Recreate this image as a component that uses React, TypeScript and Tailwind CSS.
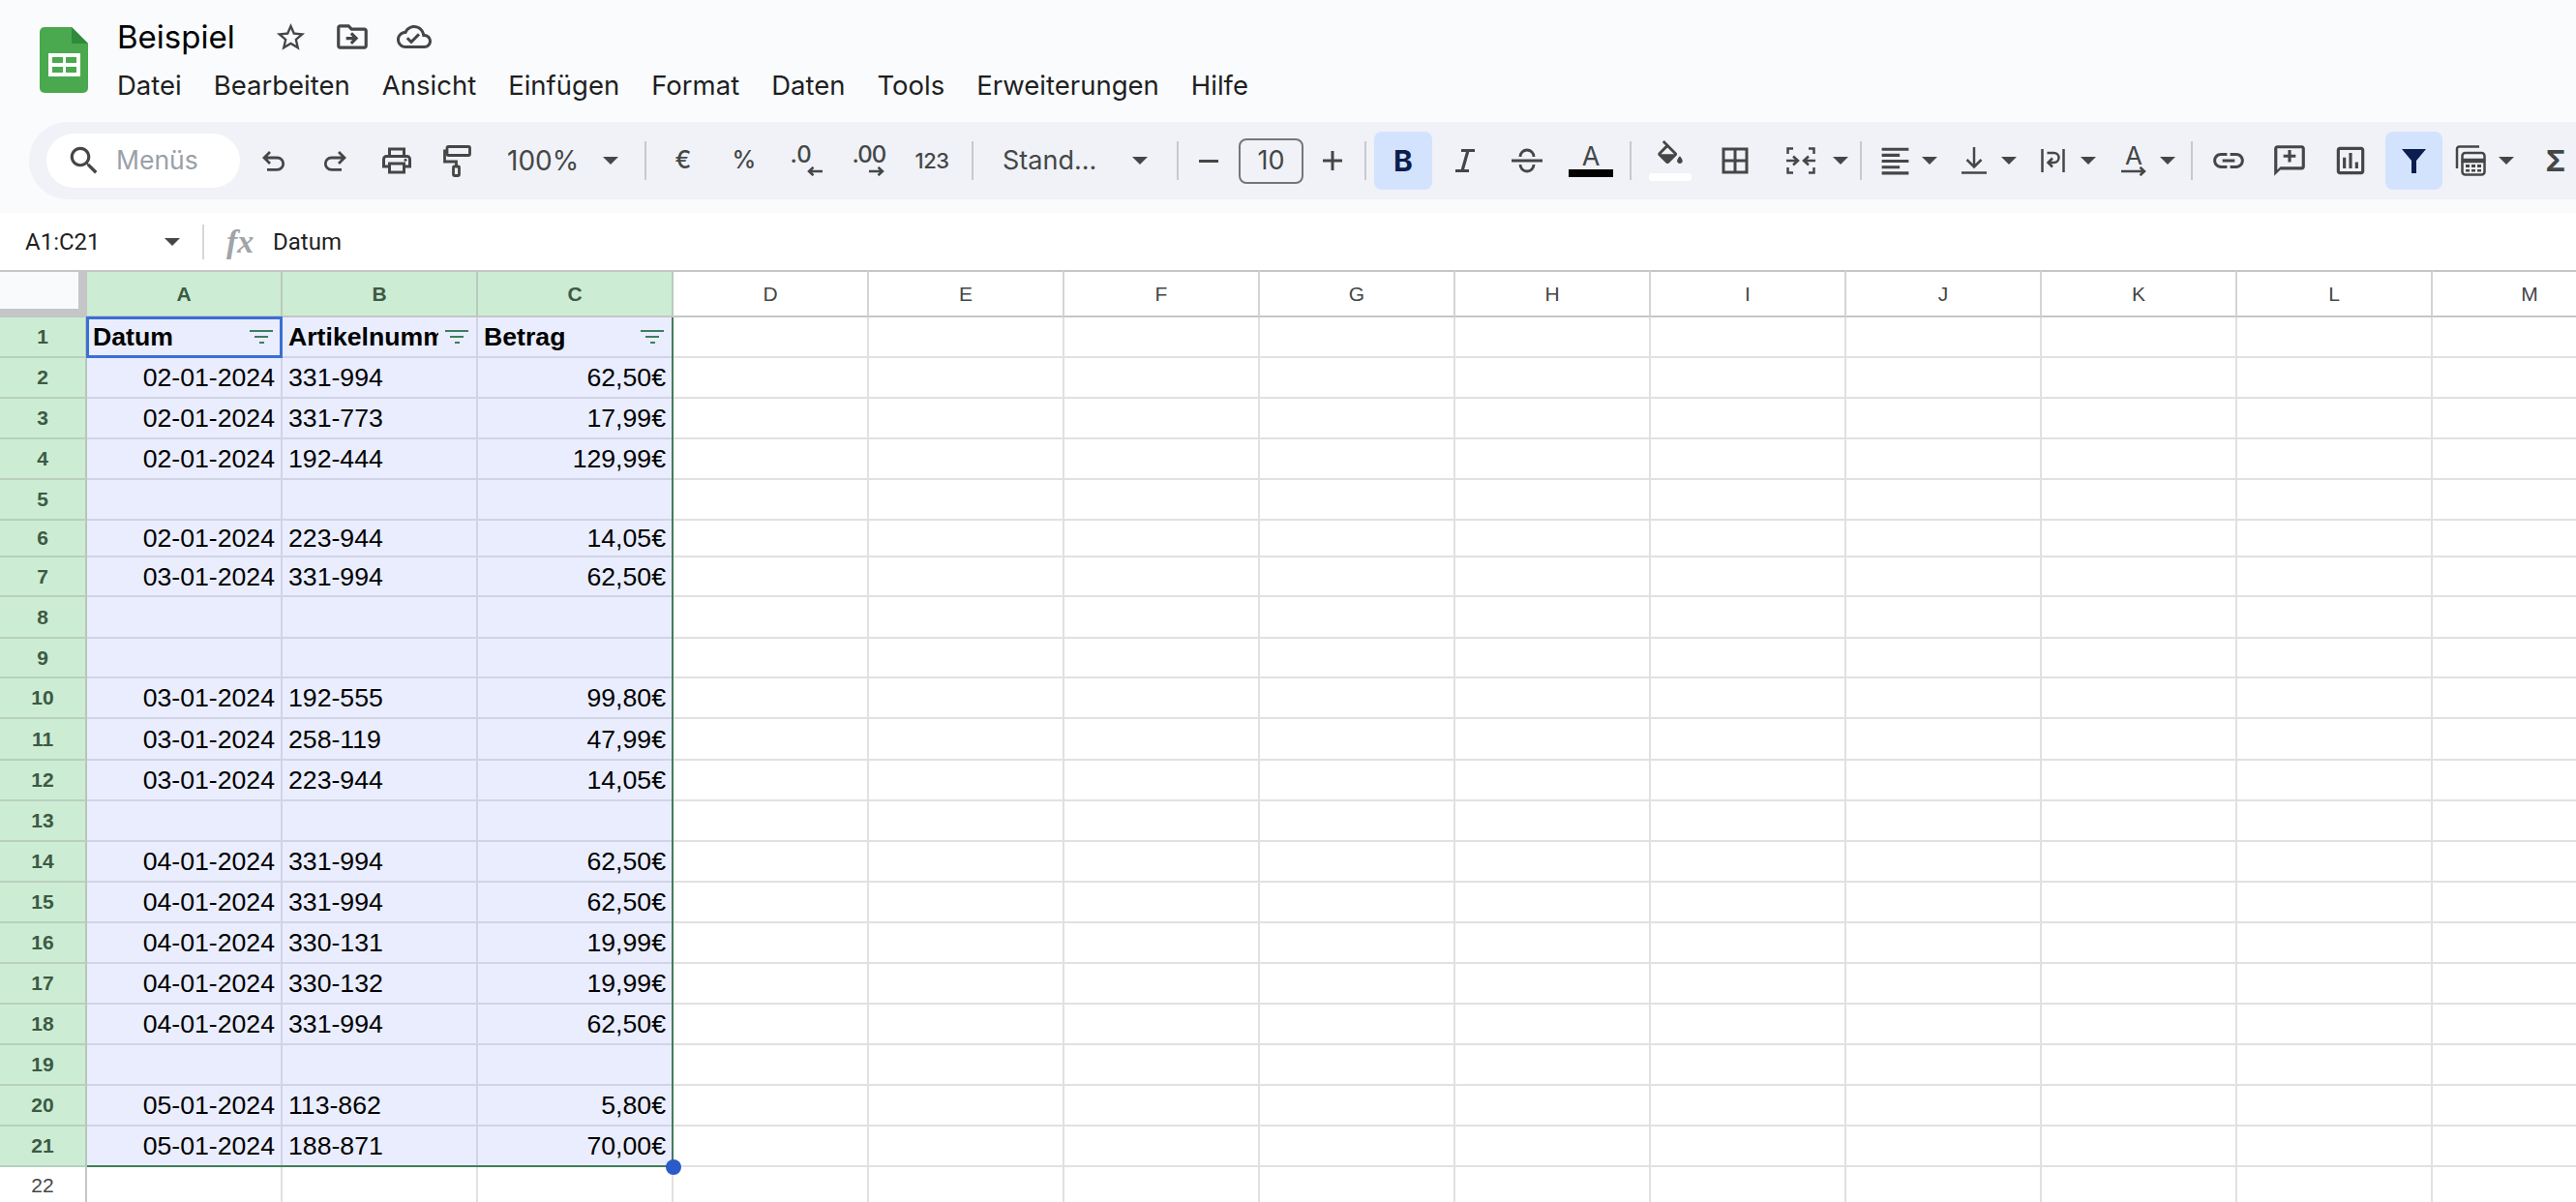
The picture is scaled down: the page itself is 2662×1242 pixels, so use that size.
import React from "react";

const rows = [
  { n: 1, h: "h-[42px]" },
  { n: 2, h: "h-[42px]", d: "02-01-2024", b: "331-994", c: "62,50€" },
  { n: 3, h: "h-[42px]", d: "02-01-2024", b: "331-773", c: "17,99€" },
  { n: 4, h: "h-[42px]", d: "02-01-2024", b: "192-444", c: "129,99€" },
  { n: 5, h: "h-[42px]" },
  { n: 6, h: "h-[38px]", d: "02-01-2024", b: "223-944", c: "14,05€" },
  { n: 7, h: "h-[41px]", d: "03-01-2024", b: "331-994", c: "62,50€" },
  { n: 8, h: "h-[43px]" },
  { n: 9, h: "h-[41px]" },
  { n: 10, h: "h-[42px]", d: "03-01-2024", b: "192-555", c: "99,80€" },
  { n: 11, h: "h-[43px]", d: "03-01-2024", b: "258-119", c: "47,99€" },
  { n: 12, h: "h-[42px]", d: "03-01-2024", b: "223-944", c: "14,05€" },
  { n: 13, h: "h-[42px]" },
  { n: 14, h: "h-[42px]", d: "04-01-2024", b: "331-994", c: "62,50€" },
  { n: 15, h: "h-[42px]", d: "04-01-2024", b: "331-994", c: "62,50€" },
  { n: 16, h: "h-[42px]", d: "04-01-2024", b: "330-131", c: "19,99€" },
  { n: 17, h: "h-[42px]", d: "04-01-2024", b: "330-132", c: "19,99€" },
  { n: 18, h: "h-[42px]", d: "04-01-2024", b: "331-994", c: "62,50€" },
  { n: 19, h: "h-[42px]" },
  { n: 20, h: "h-[42px]", d: "05-01-2024", b: "113-862", c: "5,80€" },
  { n: 21, h: "h-[42px]", d: "05-01-2024", b: "188-871", c: "70,00€" },
];

const plainCols = ["D", "E", "F", "G", "H", "I", "J", "K", "L", "M"];
const menus = ["Datei", "Bearbeiten", "Ansicht", "Einfügen", "Format", "Daten", "Tools", "Erweiterungen", "Hilfe"];

/* toolbar slot */
function Slot({ w, children }: { w: string; children?: React.ReactNode }) {
  return <div className={"flex shrink-0 items-center justify-center " + w}>{children}</div>;
}

function Sep({ w }: { w: string }) {
  return (
    <div className={"flex shrink-0 items-center justify-center " + w}>
      <div className="h-[40px] w-[2px] bg-[#c7c9cc]" />
    </div>
  );
}

function Caret() {
  return (
    <svg width="16" height="8" viewBox="0 0 16 8" className="shrink-0">
      <path d="M0 0h16L8 8z" fill="#444746" />
    </svg>
  );
}

function Mi({ size, d, extra }: { size: number; d: string; extra?: React.ReactNode }) {
  return (
    <svg width={size} height={size} viewBox="0 0 24 24" fill="#444746" className="shrink-0">
      <path d={d} />
      {extra}
    </svg>
  );
}

function Line({ w, h, vb, d, sw = 2.5 }: { w: number; h: number; vb: string; d: string; sw?: number }) {
  return (
    <svg width={w} height={h} viewBox={vb} fill="none" stroke="#444746" strokeWidth={sw} className="shrink-0">
      <path d={d} />
    </svg>
  );
}

function SheetsLogo() {
  return (
    <svg width="50" height="68" viewBox="0 0 50 68" className="mt-[28px] shrink-0">
      <path d="M5 0H33L50 17V63a5 5 0 0 1-5 5H5a5 5 0 0 1-5-5V5a5 5 0 0 1 5-5z" fill="#4aa94f" />
      <path d="M33 0L50 17H33z" fill="#2f8a3c" />
      <path d="M9 27h33v24H9z" fill="#fff" />
      <path d="M13 31h11v6H13zM27 31h11v6H27zM13 41h11v6H13zM27 41h11v6H27z" fill="#4aa94f" />
    </svg>
  );
}

function ArrowSmall({ left }: { left?: boolean }) {
  return (
    <Line
      w={16}
      h={10}
      vb="0 0 16 10"
      d={left ? "M16 5H2M6.5 .8L2 5l4.5 4.2" : "M0 5H14M9.5 .8L14 5 9.5 9.2"}
    />
  );
}

function Toolbar() {
  return (
    <div className="ml-[30px] flex h-[80px] items-center rounded-l-[40px] bg-[#f0f2f8] pl-[18px] text-[#444746]">
      <div className="flex h-[56px] w-[200px] shrink-0 items-center rounded-[28px] bg-white pl-[20px]">
        <Mi size={38} d="M15.5 14h-.79l-.28-.27C15.41 12.59 16 11.11 16 9.5 16 5.91 13.09 3 9.5 3S3 5.91 3 9.5 5.91 16 9.5 16c1.61 0 3.09-.59 4.23-1.57l.27.28v.79l5 4.99L20.49 19l-4.99-5zm-6 0C7.01 14 5 11.99 5 9.5S7.01 5 9.5 5 14 7.01 14 9.5 11.99 14 9.5 14z" />
        <span className="ml-[14px] text-[26.5px] text-[#9aa0a6]">Menüs</span>
      </div>
      <Slot w="w-[69px]">
        <Line w={25} h={22} vb="0 0 25 22" d="M9 2L3 8l6 6M3 8H16.5a6.2 6.2 0 0 1 0 12.4H6" sw={2.8} />
      </Slot>
      <Slot w="w-[59px]">
        <Line w={25} h={22} vb="0 0 25 22" d="M16 2l6 6-6 6M22 8H8.5a6.2 6.2 0 0 0 0 12.4H19" sw={2.8} />
      </Slot>
      <Slot w="w-[68px]">
        <Mi
          size={36}
          d="M19 8h-1V3H6v5H5c-1.66 0-3 1.34-3 3v6h4v4h12v-4h4v-6c0-1.66-1.34-3-3-3zM8 5h8v3H8V5zm8 12v2H8v-4h8v2zm2-2v-2H6v2H4v-4c0-.55.45-1 1-1h14c.55 0 1 .45 1 1v4h-2z"
          extra={<circle cx="18" cy="11.5" r="1" />}
        />
      </Slot>
      <Slot w="w-[57px]">
        <svg width="29" height="33" viewBox="0 0 29 33" fill="none" stroke="#444746" strokeWidth="2.8" className="shrink-0">
          <rect x="4" y="1.5" width="23.5" height="9" rx="1.5" />
          <path d="M4 6H1.5v11h12v5" />
          <rect x="10.5" y="22" width="6" height="9.5" rx="1" />
        </svg>
      </Slot>
      <div className="flex w-[109px] shrink-0 items-center pl-[23px] text-[28px]">100%</div>
      <Slot w="w-[42px]"><Caret /></Slot>
      <Sep w="w-[30px]" />
      <Slot w="w-[48px]"><span className="text-[25px] font-medium">€</span></Slot>
      <Slot w="w-[78px]"><span className="text-[25px] font-medium">%</span></Slot>
      <Slot w="w-[50px]">
        <div className="flex w-[33px] flex-col">
          <span className="h-[20px] self-start text-[24px] leading-[20px] font-medium">.0</span>
          <div className="mt-[2px] self-end"><ArrowSmall left /></div>
        </div>
      </Slot>
      <Slot w="w-[78px]">
        <div className="flex w-[33px] flex-col">
          <span className="h-[20px] self-start text-[24px] leading-[20px] font-medium tracking-[-1px]">.00</span>
          <div className="mt-[2px] self-end"><ArrowSmall /></div>
        </div>
      </Slot>
      <Slot w="w-[54px]"><span className="text-[22px] font-medium tracking-[-0.5px]">123</span></Slot>
      <Sep w="w-[30px]" />
      <div className="flex w-[130px] shrink-0 items-center pl-[16px] text-[27px]">Stand...</div>
      <Slot w="w-[56px]"><Caret /></Slot>
      <Sep w="w-[22px]" />
      <Slot w="w-[42px]"><div className="h-[3px] w-[20px] bg-[#444746]" /></Slot>
      <Slot w="w-[87px]">
        <div className="flex h-[47px] w-[67px] items-center justify-center rounded-[8px] border-2 border-[#747775] text-[27px]">10</div>
      </Slot>
      <Slot w="w-[40px]">
        <Line w={20} h={20} vb="0 0 20 20" d="M0 10H20M10 0V20" sw={3} />
      </Slot>
      <Sep w="w-[23px] pl-[5px]" />
      <div className="flex h-[60px] w-[60px] shrink-0 items-center justify-center rounded-[8px] bg-[#d3e3fd] text-[30px] font-bold text-[#0c1d4f]">B</div>
      <Slot w="w-[68px]">
        <Line w={22} h={24} vb="0 0 22 24" d="M7 1.5H21M1 22.5H15M14 1.5L8 22.5" sw={3.2} />
      </Slot>
      <Slot w="w-[60px]">
        <Line w={32} h={26} vb="0 0 32 26" d="M0 13H32M9 9a7 7 0 0 1 14 0M9 17a7 7 0 0 0 14 0" sw={2.8} />
      </Slot>
      <Slot w="w-[72px]">
        <div className="flex w-[46px] flex-col items-center">
          <span className="h-[25px] text-[27px] leading-[25px]">A</span>
          <div className="mt-[1px] h-[8px] w-[46px] bg-black" />
        </div>
      </Slot>
      <Sep w="w-[10px]" />
      <Slot w="w-[72px]">
        <div className="flex w-[44px] flex-col items-center">
          <Mi size={34} d="M16.56 8.94L7.62 0 6.21 1.41l2.38 2.38-5.15 5.15c-.59.59-.59 1.54 0 2.12l5.5 5.5c.29.29.68.44 1.06.44s.77-.15 1.06-.44l5.5-5.5c.59-.58.59-1.53 0-2.12zM5.21 10L10 5.21 14.79 10H5.21zM19 11.5s-2 2.17-2 3.5c0 1.1.9 2 2 2s2-.9 2-2c0-1.33-2-3.5-2-3.5z" />
          <div className="h-[8px] w-[44px] rounded-[3px] bg-white" />
        </div>
      </Slot>
      <Slot w="w-[62px]">
        <Mi size={36} d="M3 3v18h18V3H3zm8 16H5v-6h6v6zm0-8H5V5h6v6zm8 8h-6v-6h6v6zm0-8h-6V5h6v6z" />
      </Slot>
      <div className="w-[14px] shrink-0" />
      <Slot w="w-[46px]">
        <Line
          w={30}
          h={28}
          vb="0 0 30 28"
          d="M7 1.5H1.5V7M1.5 21V26.5H7M23 1.5H28.5V7M28.5 21V26.5H23M0 14H11M7 9.5L12 14 7 18.5M30 14H19M23 9.5L18 14 23 18.5"
        />
      </Slot>
      <Slot w="w-[36px]"><Caret /></Slot>
      <Sep w="w-[6px]" />
      <div className="w-[7px] shrink-0" />
      <Slot w="w-[50px]">
        <Mi size={37} d="M15 15H3v2h12v-2zm0-8H3v2h12V7zM3 13h18v-2H3v2zm0 8h18v-2H3v2zM3 3v2h18V3H3z" />
      </Slot>
      <Slot w="w-[22px]"><Caret /></Slot>
      <div className="w-[12px] shrink-0" />
      <Slot w="w-[46px]">
        <Line w={26} h={28} vb="0 0 26 28" d="M13 0V20M5.5 13L13 20.5 20.5 13M0 26.5H26" />
      </Slot>
      <Slot w="w-[26px]"><Caret /></Slot>
      <div className="w-[12px] shrink-0" />
      <Slot w="w-[40px]">
        <Line w={25} h={24} vb="0 0 25 24" d="M1.5 0V24M23.5 0V24M6.5 4H13.5a4.5 4.5 0 0 1 0 10H8M12 9.5L7.5 14 12 18.5" />
      </Slot>
      <Slot w="w-[34px]"><Caret /></Slot>
      <div className="w-[7px] shrink-0" />
      <Slot w="w-[46px]">
        <div className="flex w-[26px] flex-col items-center">
          <span className="h-[22px] text-[26px] leading-[22px]">A</span>
          <Line w={26} h={10} vb="0 0 26 10" d="M0 5H24M19.5 .8L24 5 19.5 9.2" />
        </div>
      </Slot>
      <Slot w="w-[24px]"><Caret /></Slot>
      <Sep w="w-[14px] ml-[6px] mr-[-6px]" />
      <Slot w="w-[74px]">
        <Mi size={38} d="M3.9 12c0-1.71 1.39-3.1 3.1-3.1h4V7H7c-2.76 0-5 2.24-5 5s2.24 5 5 5h4v-1.9H7c-1.71 0-3.1-1.39-3.1-3.1zM8 13h8v-2H8v2zm9-6h-4v1.9h4c1.71 0 3.1 1.39 3.1 3.1s-1.39 3.1-3.1 3.1h-4V17h4c2.76 0 5-2.24 5-5s-2.24-5-5-5z" />
      </Slot>
      <Slot w="w-[52px]">
        <Mi size={38} d="M20 2H4c-1.1 0-2 .9-2 2v18l4-4h14c1.1 0 2-.9 2-2V4c0-1.1-.9-2-2-2zm0 14H6l-2 2V4h16v12zM11 5h2v3h3v2h-3v3h-2v-3H8V8h3V5z" />
      </Slot>
      <Slot w="w-[73px]">
        <Mi size={38} d="M19 3H5c-1.1 0-2 .9-2 2v14c0 1.1.9 2 2 2h14c1.1 0 2-.9 2-2V5c0-1.1-.9-2-2-2zm0 16H5V5h14v14zM7 10h2v7H7zM11 7h2v10h-2zM15 13h2v4h-2z" />
      </Slot>
      <div className="flex h-[60px] w-[59px] shrink-0 items-center justify-center rounded-[8px] bg-[#d3e3fd]">
        <svg width="25" height="25" viewBox="0 0 25 25" fill="#0c1d4f">
          <path d="M0 0H25L15 12V25H10V12z" />
        </svg>
      </div>
      <Slot w="w-[58px]">
        <svg width="32" height="32" viewBox="0 0 32 32" fill="none" stroke="#444746" strokeWidth="2.5" className="shrink-0">
          <path d="M2 24V4a2.5 2.5 0 0 1 2.5-2.5H25" />
          <rect x="7.5" y="8" width="23" height="22.5" rx="3" />
          <path d="M8 15h22v2H8z" fill="#444746" />
          <path d="M11 20h4v3h-4zM17 20h4v3h-4zM23 20h4v3h-4zM11 25h4v2.5h-4zM17 25h4v2.5h-4zM23 25h4v2.5h-4z" fill="#444746" stroke="none" />
        </svg>
      </Slot>
      <Slot w="w-[16px]"><Caret /></Slot>
      <Slot w="w-[86px]">
        <span className="text-[30px] font-bold">Σ</span>
      </Slot>
    </div>
  );
}

function FilterGlyph() {
  return (
    <div className="flex w-[24px] shrink-0 flex-col items-center gap-[4px]">
      <div className="h-[2px] w-[24px] bg-[#3f7d5b]" />
      <div className="h-[2px] w-[14px] bg-[#3f7d5b]" />
      <div className="h-[2px] w-[5px] bg-[#3f7d5b]" />
    </div>
  );
}

function Grid() {
  return (
    <div className="relative font-['Liberation_Sans',Arial,sans-serif]">
      {/* column headers */}
      <div className="flex h-[49px] text-[21px]">
        <div className="box-border h-[49px] w-[90px] shrink-0 border-t-2 border-r-[9px] border-b-[9px] border-[#c4c6c8] bg-[#f9fafb]" />
        {["A", "B", "C"].map((l) => (
          <div
            key={l}
            className="box-border flex w-[202px] shrink-0 items-center justify-center border-t-2 border-r-2 border-b-2 border-t-[#c4c6c8] border-r-[#b9c9be] border-b-[#c4c6c8] bg-[#ccedd4] font-bold text-[#3d5a44]"
          >
            {l}
          </div>
        ))}
        {plainCols.map((l) => (
          <div
            key={l}
            className="box-border flex w-[202px] shrink-0 items-center justify-center border-t-2 border-r-2 border-b-2 border-t-[#c4c6c8] border-r-[#d4d4d4] border-b-[#c4c6c8] bg-white text-[#444746]"
          >
            {l}
          </div>
        ))}
      </div>

      {/* rows */}
      {rows.map((r) => (
        <div key={r.n} className={"flex text-[26.67px] text-black " + r.h}>
          <div className="box-border flex w-[90px] shrink-0 items-center justify-center border-r-2 border-b-2 border-r-[#b5c7ba] border-b-[#b9cfbf] bg-[#ccedd4] text-[21px] font-bold text-[#3d5a44]">
            {r.n}
          </div>
          {r.n === 1 ? (
            <>
              <div className="box-border flex w-[202px] shrink-0 items-center justify-between border-r-2 border-b-2 border-[#d0d4e4] bg-[#e9edfd] pr-[8px] pl-[6px] font-bold">
                <span>Datum</span>
                <FilterGlyph />
              </div>
              <div className="box-border flex w-[202px] shrink-0 items-center justify-between border-r-2 border-b-2 border-[#d0d4e4] bg-[#e9edfd] pr-[8px] pl-[6px] font-bold">
                <span className="w-[155px] overflow-hidden whitespace-nowrap">Artikelnummer</span>
                <FilterGlyph />
              </div>
              <div className="box-border flex w-[202px] shrink-0 items-center justify-between border-r-2 border-b-2 border-[#d0d4e4] bg-[#e9edfd] pr-[8px] pl-[6px] font-bold">
                <span>Betrag</span>
                <FilterGlyph />
              </div>
            </>
          ) : (
            <>
              <div className="box-border flex w-[202px] shrink-0 items-center justify-end border-r-2 border-b-2 border-[#d0d4e4] bg-[#e9edfd] pr-[6px]">{r.d}</div>
              <div className="box-border flex w-[202px] shrink-0 items-center border-r-2 border-b-2 border-[#d0d4e4] bg-[#e9edfd] pl-[6px]">{r.b}</div>
              <div className="box-border flex w-[202px] shrink-0 items-center justify-end border-r-2 border-b-2 border-[#d0d4e4] bg-[#e9edfd] pr-[6px]">{r.c}</div>
            </>
          )}
          {plainCols.map((l) => (
            <div key={l} className="box-border w-[202px] shrink-0 border-r-2 border-b-2 border-[#e1e1e1] bg-white" />
          ))}
        </div>
      ))}

      {/* row 22 */}
      <div className="flex h-[37px]">
        <div className="box-border flex w-[90px] shrink-0 items-center justify-center border-r-2 border-[#c7c7c7] bg-white text-[21px] text-[#444746]">22</div>
        {["A", "B", "C", ...plainCols].map((l) => (
          <div key={l} className="box-border w-[202px] shrink-0 border-r-2 border-[#e1e1e1] bg-white" />
        ))}
      </div>

      {/* selection */}
      <div className="absolute top-[49px] left-[90px] box-border h-[878px] w-[606px] border-r-2 border-b-2 border-[#3f7d5b]" />
      <div className="absolute top-[48px] left-[89px] box-border h-[43px] w-[203px] border-[3px] border-[#3b6fd4]" />
      <div className="absolute top-[919px] left-[688px] h-[16px] w-[16px] rounded-full bg-[#2a5bc8]" />
    </div>
  );
}

export default function App() {
  return (
    <div className="h-[1242px] w-[2662px] overflow-hidden bg-white font-['Inter','Noto_Sans',sans-serif] text-[#1f1f1f]">
      {/* top */}
      <div className="h-[220px] bg-[#f9fbfd]">
        <div className="flex h-[126px] pl-[41px]">
          <SheetsLogo />
          <div className="ml-[30px] pt-[18px]">
            <div className="flex h-[40px] items-center">
              <span className="w-[122px] text-[33px] leading-[40px] text-black">Beispiel</span>
              <div className="ml-[40px]">
                <Mi size={35} d="M22 9.24l-7.19-.62L12 2 9.19 8.63 2 9.24l5.46 4.73L5.82 21 12 17.27 18.18 21l-1.63-7.03L22 9.24zM12 15.4l-3.76 2.27 1-4.28-3.32-2.88 4.38-.38L12 6.1l1.71 4.04 4.38.38-3.32 2.88 1 4.28L12 15.4z" />
              </div>
              <div className="ml-[27px]">
                <Mi size={38} d="M20 6h-8l-2-2H4c-1.1 0-2 .9-2 2v12c0 1.1.9 2 2 2h16c1.1 0 2-.9 2-2V8c0-1.1-.9-2-2-2zm0 12H4V6h5.17l2 2H20v10zM12.16 12H8v2h4.16l-1.59 1.59L12 17l4-4-4-4-1.41 1.41z" />
              </div>
              <div className="ml-[27px]">
                <Mi size={36} d="M19.35 10.04C18.67 6.59 15.64 4 12 4 9.11 4 6.6 5.64 5.35 8.04 2.34 8.36 0 10.91 0 14c0 3.31 2.69 6 6 6h13c2.76 0 5-2.24 5-5 0-2.64-2.05-4.78-4.65-4.96zM19 18H6c-2.21 0-4-1.79-4-4 0-2.05 1.53-3.76 3.56-3.97l1.07-.11.5-.95C8.08 7.14 9.94 6 12 6c2.62 0 4.88 1.86 5.39 4.43l.3 1.5 1.53.11c1.56.1 2.78 1.41 2.78 2.96 0 1.65-1.35 3-3 3zm-9-3.82l-2.09-2.09L6.5 13.5 10 17l6.01-6.01-1.41-1.41z" />
              </div>
            </div>
            <div className="mt-[10px] flex h-[40px] items-center gap-[33px] text-[27.5px] leading-[40px]">
              {menus.map((m) => (
                <span key={m}>{m}</span>
              ))}
            </div>
          </div>
        </div>
        <Toolbar />
      </div>

      {/* formula bar */}
      <div className="flex h-[59px] items-center bg-white pl-[26px] text-[24px]">
        <span className="w-[144px] font-['Roboto',sans-serif]">A1:C21</span>
        <Caret />
        <div className="ml-[23px] h-[36px] w-[2px] bg-[#d5d7da]" />
        <span className="ml-[23px] w-[30px] font-['Liberation_Serif',serif] text-[34px] leading-none font-bold text-[#a0a4a8] italic">fx</span>
        <span className="ml-[18px] font-['Roboto',sans-serif]">Datum</span>
      </div>

      <Grid />
    </div>
  );
}
